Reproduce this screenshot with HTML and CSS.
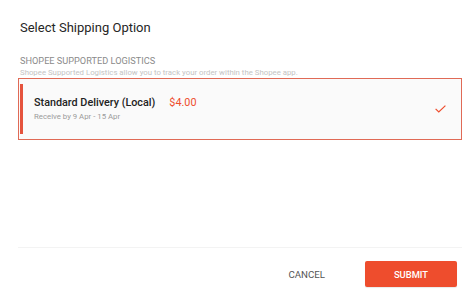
FILE: index.html
```html
<!DOCTYPE html>
<html>
<head>
<meta charset="utf-8">
<link rel="stylesheet" href="styles.css">
</head>
<body>
<div class="dialog">
  <h1 class="title">Select Shipping Option</h1>
  <div class="section">
    <div class="section-head">SHOPEE SUPPORTED LOGISTICS</div>
    <div class="section-desc">Shopee Supported Logistics allow you to track your order within the Shopee app.</div>
    <div class="option selected">
      <div class="bar"></div>
      <div class="option-body">
        <div class="option-line">
          <span class="option-name">Standard Delivery (Local)</span>
          <span class="option-price">$4.00</span>
        </div>
        <div class="option-eta">Receive by 9 Apr - 15 Apr</div>
      </div>
      <svg class="check" width="11" height="8" viewBox="0 0 11 8"><path d="M0.6 3.8 L3.8 7 L10.4 0.6" fill="none" stroke="#ee4d2d" stroke-width="1.2"/></svg>
    </div>
  </div>
  <div class="spacer"></div>
  <div class="footer">
    <button class="btn-cancel">CANCEL</button>
    <button class="btn-submit">SUBMIT</button>
  </div>
</div>
</body>
</html>
```

FILE: styles.css
```css
html, body {
  margin: 0;
  padding: 0;
  background: #fff;
}
body {
  font-family: Roboto, "Liberation Sans", Arial, sans-serif;
  width: 474px;
  height: 299px;
  overflow: hidden;
}
.dialog {
  box-sizing: border-box;
  height: 299px;
  padding: 0 12px 0 18px;
  display: flex;
  flex-direction: column;
}
.title {
  margin: 0;
  padding: 18px 0 0 2px;
  font-size: 13px;
  font-weight: 400;
  color: #262626;
  line-height: 19px;
}
.section {
  margin-top: 18px;
}
.section-head {
  padding-left: 2px;
  font-size: 9.2px;
  line-height: 12px;
  color: #8a8a8a;
}
.section-desc {
  padding-left: 2px;
  margin-top: 1px;
  font-size: 7.8px;
  line-height: 10px;
  color: #c4c4c4;
}
.option {
  margin-top: 0;
  box-sizing: border-box;
  height: 62px;
  border: 1px solid #e06a56;
  background: #fafafa;
  display: flex;
  align-items: center;
  padding: 0 15px 0 1px;
}
.bar {
  width: 3px;
  height: 50px;
  background: #e5533d;
}
.option-body {
  flex: 1;
  padding-left: 11px;
}
.option-line {
  display: flex;
  align-items: baseline;
}
.option-name {
  font-size: 10.8px;
  font-weight: 500;
  color: #222;
  line-height: 14px;
}
.option-price {
  margin-left: 14px;
  font-size: 10.8px;
  color: #ee4d2d;
  line-height: 14px;
}
.option-eta {
  margin-top: 2px;
  font-size: 7.8px;
  color: #9a9a9a;
  line-height: 10px;
}
.check {
  display: block;
}
.spacer {
  flex: 1;
  border-bottom: 1px solid #f3f3f3;
  margin-bottom: 13px;
}
.footer {
  display: flex;
  justify-content: flex-end;
  align-items: center;
  padding-right: 5px;
  margin-bottom: 12px;
}
.btn-cancel {
  background: none;
  border: none;
  font-family: inherit;
  font-size: 9.7px;
  color: #555;
  padding: 0;
  margin-right: 40px;
  cursor: pointer;
}
.btn-submit {
  width: 92px;
  height: 26px;
  background: #ee4d2d;
  border: none;
  border-radius: 2px;
  color: #fff;
  font-family: inherit;
  font-size: 9.4px;
  font-weight: 500;
  cursor: pointer;
  box-shadow: 0 1px 1px rgba(0,0,0,0.09);
}
```
